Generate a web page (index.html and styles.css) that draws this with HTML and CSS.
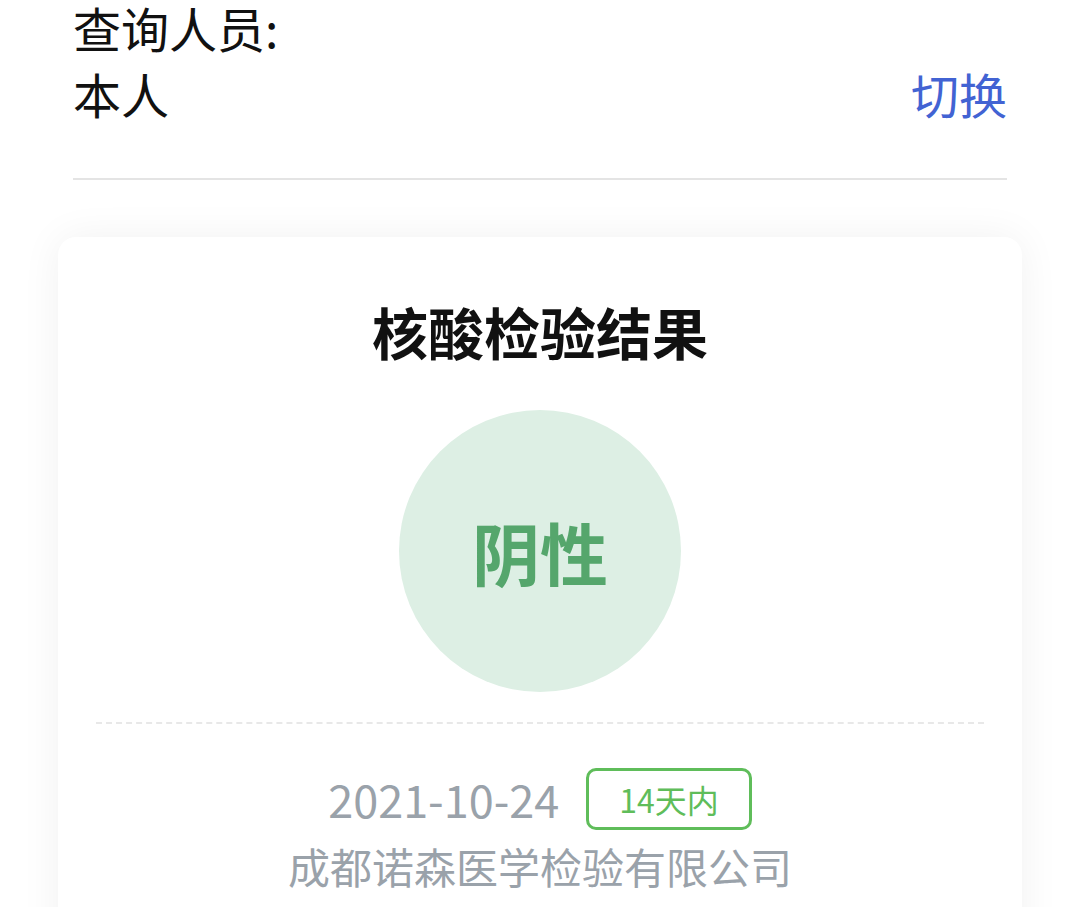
FILE: index.html
```html
<!DOCTYPE html>
<html>
<head>
    <title>核酸检验结果</title>
    <link rel="stylesheet" href="styles.css">
</head>
<body>
    <div class="query">
        <div class="query-label">查询人员:</div>
        <div class="query-row">
            <span class="query-name">本人</span>
            <a class="switch">切换</a>
        </div>
    </div>

    <div class="result-card">
        <h1>核酸检验结果</h1>

        <div class="result-circle">
            <span>阴性</span>
        </div>

        <div class="dashed"></div>

        <div class="date-row">
            <span class="date">2021-10-24</span>
            <span class="tag">14天内</span>
        </div>
        <div class="org">成都诺森医学检验有限公司</div>
    </div>
</body>
</html>
```

FILE: styles.css
```css
:root {
    --blue: #4263d3;
    --green: #55a66c;
    --green-light: #ddefe4;
    --tag-green: #5fbd5a;
    --grey: #9aa2aa;
}

body {
    margin: 0;
    background: #fff;
    font-family: "Noto Sans CJK SC", "Noto Sans", sans-serif;
    color: #111;
    overflow: hidden;
}

.query {
    margin: 0 73px;
    font-size: 48px;
    padding-bottom: 46px;
    border-bottom: 2px solid #e4e4e4;
}

.query-label {
    line-height: 54px;
}

.query-row {
    display: flex;
    justify-content: space-between;
    line-height: 78px;
}

.switch {
    color: var(--blue);
    cursor: pointer;
}

.result-card {
    margin: 57px 58px 0;
    background: #fff;
    border-radius: 18px;
    box-shadow: 0 0 40px rgba(0,0,0,0.06);
    padding: 54px 38px 60px;
    text-align: center;
}

h1 {
    margin: 0;
    font-size: 56px;
    line-height: 80px;
    font-weight: 700;
    color: #111;
}

.result-circle {
    width: 282px;
    height: 282px;
    border-radius: 50%;
    background: var(--green-light);
    margin: 39px auto 0;
    display: flex;
    align-items: center;
    justify-content: center;
}

.result-circle span {
    font-size: 68px;
    font-weight: 700;
    color: var(--green);
}

.dashed {
    margin-top: 30px;
    border-top: 2px dashed #e8e8e8;
}

.date-row {
    margin-top: 44px;
    display: flex;
    justify-content: center;
    align-items: center;
    gap: 27px;
}

.date {
    font-size: 45px;
    line-height: 56px;
    color: var(--grey);
}

.tag {
    font-size: 32px;
    color: var(--tag-green);
    border: 3px solid var(--tag-green);
    border-radius: 10px;
    height: 56px;
    line-height: 56px;
    padding: 0 30px;
}

.org {
    margin-top: 6px;
    font-size: 42px;
    line-height: 60px;
    color: var(--grey);
}
```
